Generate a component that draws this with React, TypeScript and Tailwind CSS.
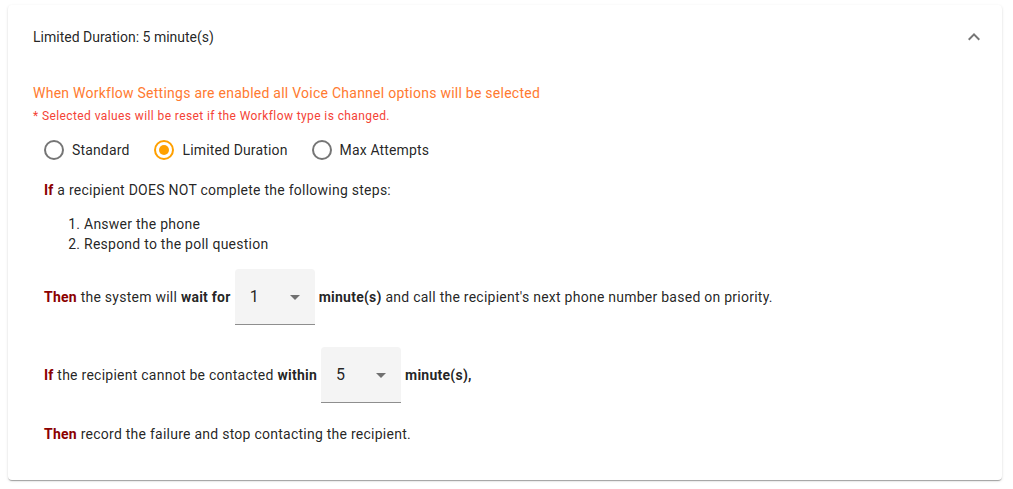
import React from "react";

const Radio = ({ checked, label, mr }: { checked?: boolean; label: string; mr: string }) => (
  <div className={`flex items-center ${mr}`}>
    <svg width="20" height="20" viewBox="0 0 20 20" className="shrink-0">
      <circle
        cx="10"
        cy="10"
        r="9"
        fill="none"
        stroke={checked ? "#ffa000" : "rgba(0,0,0,0.54)"}
        strokeWidth="2"
      />
      {checked && <circle cx="10" cy="10" r="5" fill="#ffa000" />}
    </svg>
    <span className="ml-[8px] text-[14px] leading-[20px] tracking-[0.15px] text-[rgba(0,0,0,0.87)]">{label}</span>
  </div>
);

const Select = ({ value }: { value: string }) => (
  <div className="mx-[4px] w-[80px] h-[56px] bg-[#f4f4f4] rounded-t-[4px] border-b border-[rgba(0,0,0,0.42)] flex items-center relative shrink-0">
    <span className="pl-[15px] text-[16px] tracking-normal text-[rgba(0,0,0,0.87)]">{value}</span>
    <svg width="24" height="24" viewBox="0 0 24 24" className="absolute right-[8px] top-[16px]">
      <path d="M7 10l5 5 5-5z" fill="rgba(0,0,0,0.54)" />
    </svg>
  </div>
);

export default function App() {
  return (
    <div className="min-h-[489px] bg-white pt-[5px] pl-[8px]" style={{ fontFamily: "Roboto, 'Noto Sans', sans-serif" }}>
      <div className="w-[994px] bg-white rounded-[4px] shadow-[0px_2px_1px_-1px_rgba(0,0,0,0.2),0px_1px_1px_0px_rgba(0,0,0,0.14),0px_1px_3px_0px_rgba(0,0,0,0.12)]">
        <div className="h-[64px] flex items-center justify-between pl-[25px] pr-[16px]">
          <span className="text-[14px] text-[rgba(0,0,0,0.87)]">Limited Duration: 5 minute(s)</span>
          <svg width="24" height="24" viewBox="0 0 24 24">
            <path d="M12 8l-6 6 1.41 1.41L12 10.83l4.59 4.58L18 14z" fill="rgba(0,0,0,0.54)" />
          </svg>
        </div>
        <div className="pl-[25px] pt-[14px] pb-[36px] text-[rgba(0,0,0,0.87)] tracking-[0.25px]">
          <div className="text-[14px] leading-[20px] text-[#ff7a30]">
            When Workflow Settings are enabled all Voice Channel options will be selected
          </div>
          <div className="mt-[5px] text-[12px] leading-[16px] tracking-[0.4px] text-[#f44336]">
            * Selected values will be reset if the Workflow type is changed.
          </div>
          <div className="pl-[11px]">
            <div className="h-[40px] mt-[6px] flex items-center">
              <Radio label="Standard" mr="mr-[25px]" />
              <Radio checked label="Limited Duration" mr="mr-[24px]" />
              <Radio label="Max Attempts" mr="mr-[24px]" />
            </div>
            <div className="mt-[10px] text-[14px] leading-[20px]">
              <span className="font-bold text-[#8b0000]">If</span> a recipient DOES NOT complete the following steps:
            </div>
            <ol className="mt-[14px] pl-[40px] list-decimal text-[14px] leading-[20px]">
              <li>Answer the phone</li>
              <li>Respond to the poll question</li>
            </ol>
            <div className="mt-[15px] flex items-center text-[14px] leading-[20px]">
              <span>
                <span className="font-bold text-[#8b0000]">Then</span> the system will <span className="font-bold">wait for</span>
              </span>
              <Select value="1" />
              <span>
                <span className="font-bold">minute(s)</span> and call the recipient's next phone number based on priority.
              </span>
            </div>
            <div className="mt-[22px] flex items-center text-[14px] leading-[20px]">
              <span>
                <span className="font-bold text-[#8b0000]">If</span> the recipient cannot be contacted <span className="font-bold">within</span>
              </span>
              <Select value="5" />
              <span className="font-bold">minute(s),</span>
            </div>
            <div className="mt-[21px] text-[14px] leading-[20px]">
              <span className="font-bold text-[#8b0000]">Then</span> record the failure and stop contacting the recipient.
            </div>
          </div>
        </div>
      </div>
    </div>
  );
}
